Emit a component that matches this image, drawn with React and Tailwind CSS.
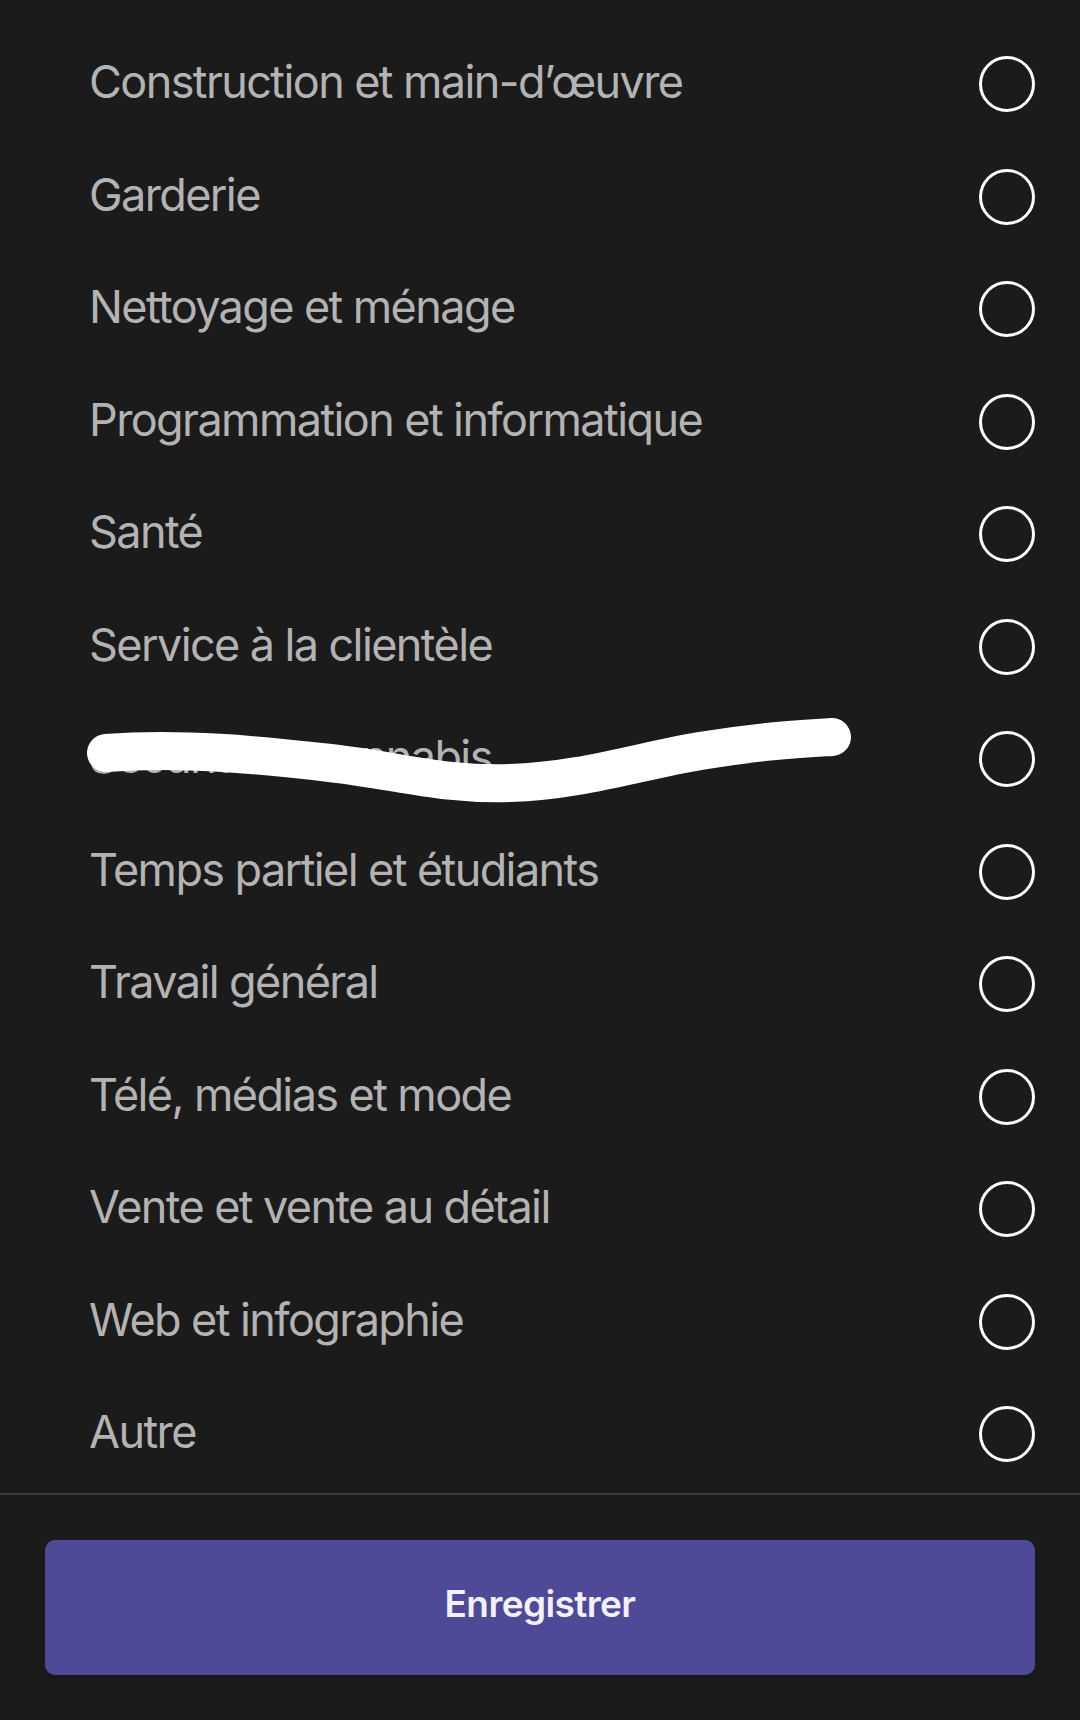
import React, { useState } from 'react';

const categories = [
  '',
  'Construction et main-d’œuvre',
  'Garderie',
  'Nettoyage et ménage',
  'Programmation et informatique',
  'Santé',
  'Service à la clientèle',
  'Sécurité et cannabis',
  'Temps partiel et étudiants',
  'Travail général',
  'Télé, médias et mode',
  'Vente et vente au détail',
  'Web et infographie',
  'Autre',
];

const Scribble = () => (
  <svg className="absolute left-0 top-0 pointer-events-none" width="1080" height="112" viewBox="0 0 1080 112">
    <path
      d="M 106 50 C 180 44, 260 52, 330 60 S 440 82, 510 80 S 640 58, 700 48 S 800 36, 832 34"
      fill="none"
      stroke="#ffffff"
      strokeWidth="38"
      strokeLinecap="round"
      strokeLinejoin="round"
    />
  </svg>
);

const App = () => {
  const [selected, setSelected] = useState(null);

  return (
    <div className="w-[1080px] h-[1720px] bg-[#1b1b1b] overflow-hidden flex flex-col" style={{ fontFamily: 'Inter, "Noto Sans", sans-serif' }}>
      <ul className="-mt-[84.5px]">
        {categories.map((label, i) => (
          <li
            key={i}
            onClick={() => setSelected(i)}
            className="relative h-[112.5px] flex items-center justify-between pl-[89px] pr-[45px]"
          >
            <span className="text-[45px] text-[#b3b3b3] tracking-[-1.6px] leading-none mb-[5px]">{label}</span>
            <span className="w-[56px] h-[56px] rounded-full border-[3px] border-white flex items-center justify-center">
              {selected === i && <span className="w-[30px] h-[30px] rounded-full bg-white" />}
            </span>
            {label === 'Sécurité et cannabis' && <Scribble />}
          </li>
        ))}
      </ul>
      <div className="h-[2.5px] bg-[#3a3a3a] mt-[2px]" />
      <div className="flex-1 flex items-center px-[45px]">
        <button className="w-full h-[135px] rounded-[10px] bg-[#4e4a97] text-[#f2f0fa] text-[37px] font-semibold tracking-[-0.6px] pb-[8px] shadow-md">
          Enregistrer
        </button>
      </div>
    </div>
  );
};

export default App;
